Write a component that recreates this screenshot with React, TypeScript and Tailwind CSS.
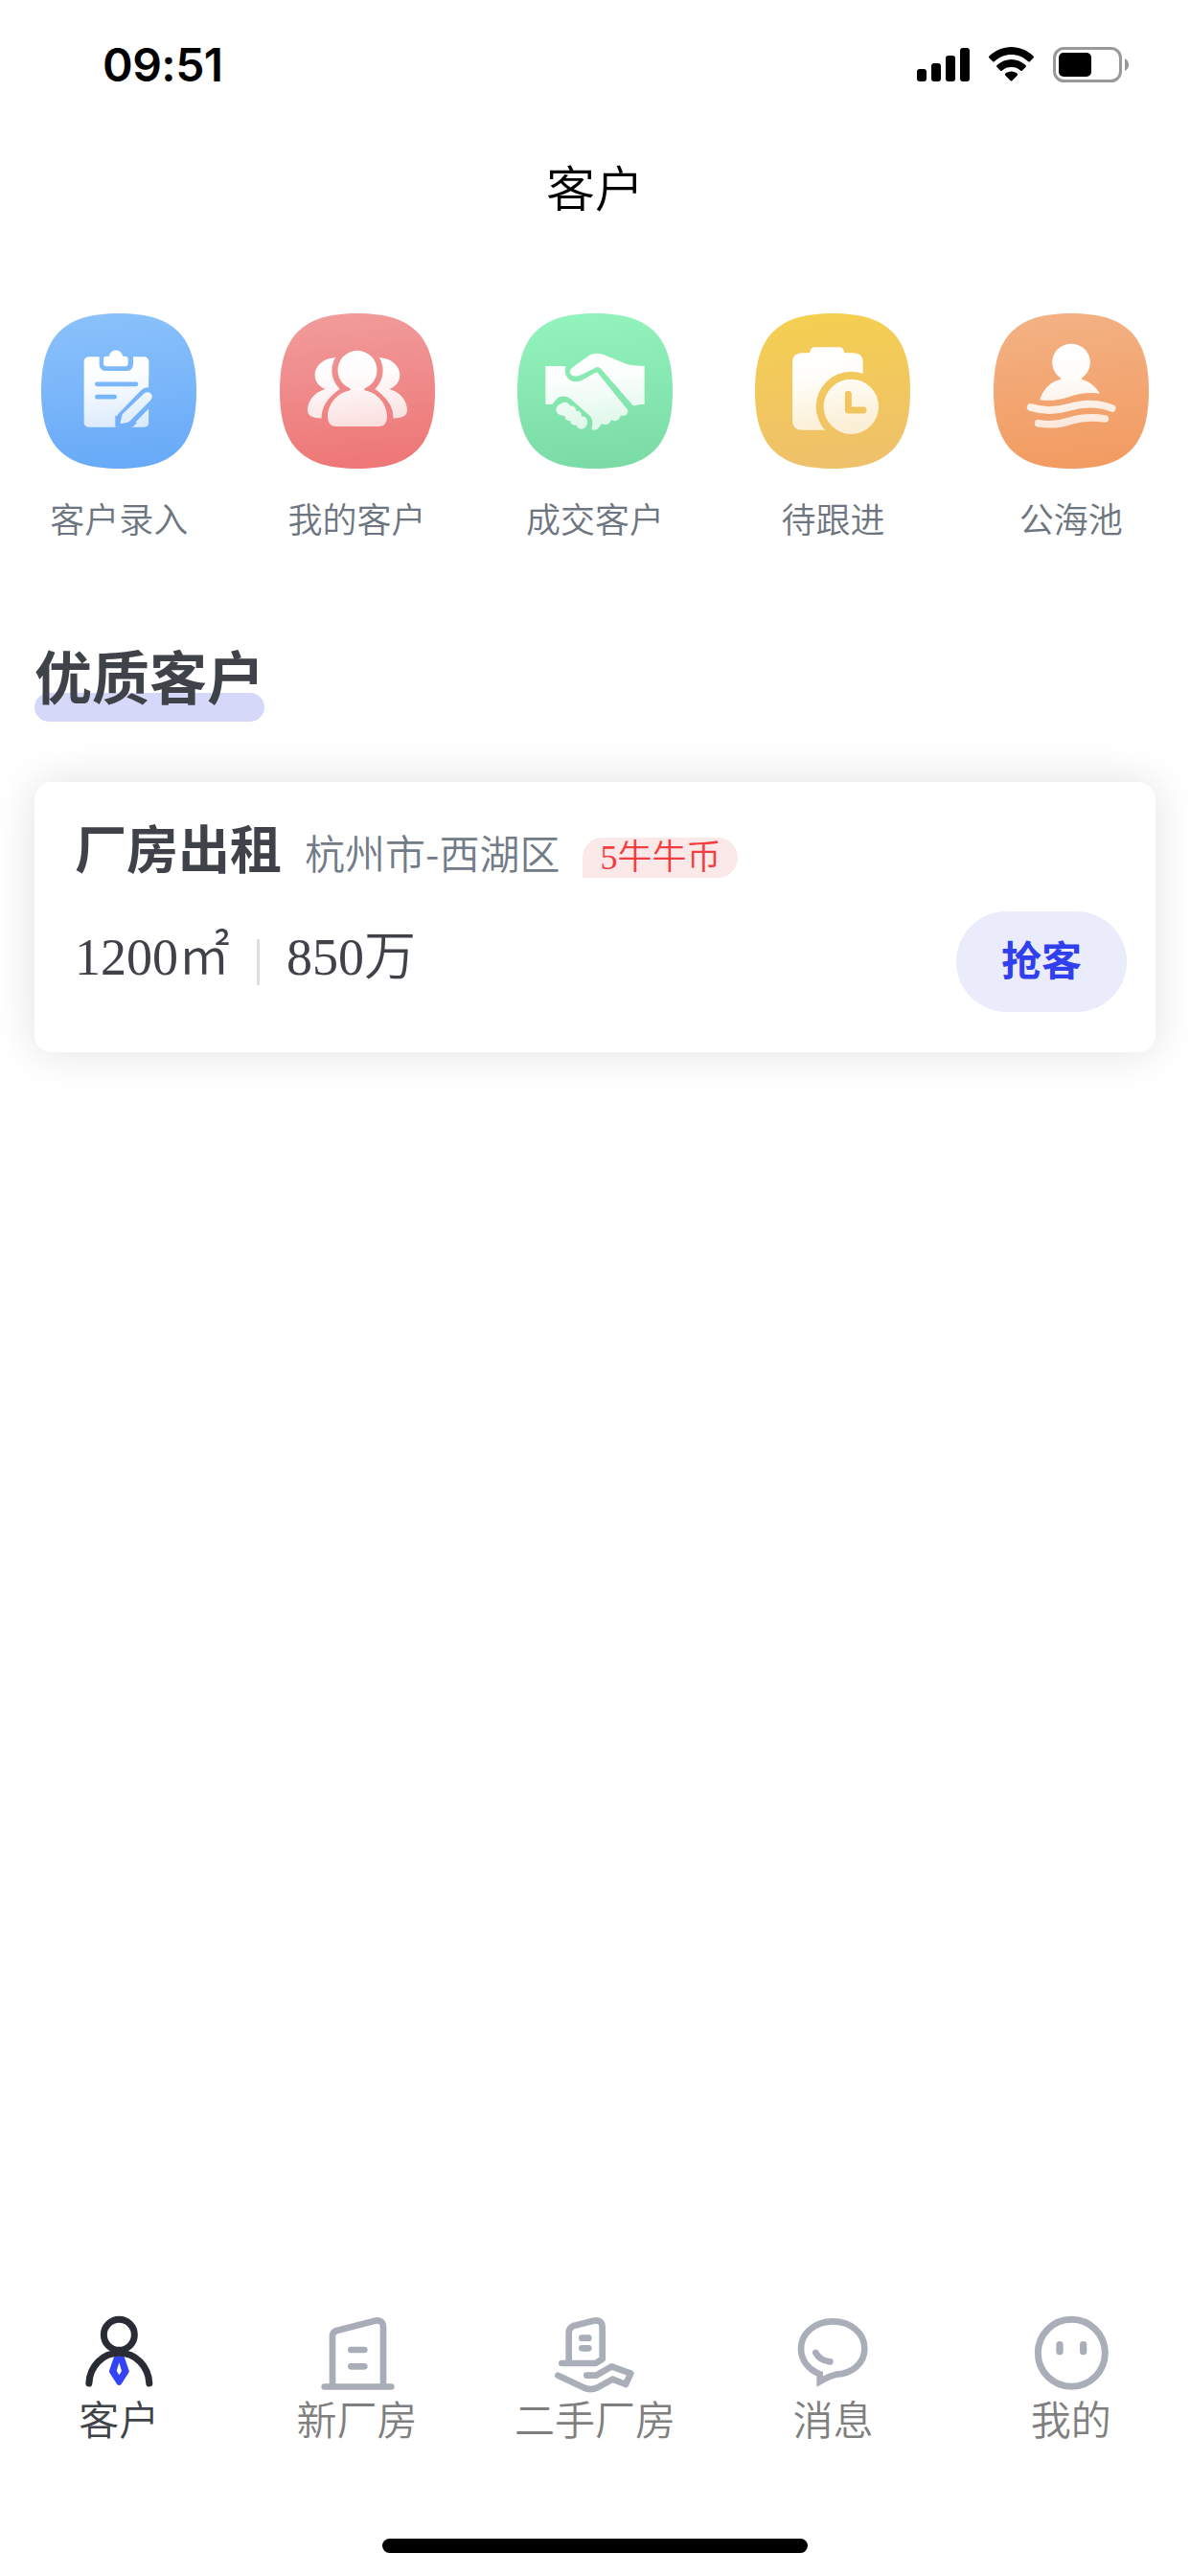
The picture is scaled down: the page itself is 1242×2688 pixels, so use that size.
import React from 'react';

interface QuickAction {
  label: string;
  icon: React.ReactNode;
}

interface Tab {
  label: string;
  icon: React.ReactNode;
  active?: boolean;
}

const Tile: React.FC<{ id: string; from: string; to: string; children: React.ReactNode }> = ({ id, from, to, children }) => (
  <svg className="w-[162px] h-[162px]" viewBox="0 0 486 486">
    <defs>
      <linearGradient id={`${id}-bg`} x1="0.45" y1="0" x2="0.55" y2="1">
        <stop offset="0" stopColor={from} />
        <stop offset="1" stopColor={to} />
      </linearGradient>
      <linearGradient id={`${id}-fg`} gradientUnits="userSpaceOnUse" x1="220" y1="120" x2="250" y2="370">
        <stop offset="0" stopColor="#fff" />
        <stop offset="0.3" stopColor="#fff" stopOpacity="0.97" />
        <stop offset="1" stopColor="#fff" stopOpacity="0.72" />
      </linearGradient>
    </defs>
    <path
      d="M0 243C0 71 71 0 243 0S486 71 486 243 415 486 243 486 0 415 0 243Z"
      fill={`url(#${id}-bg)`}
    />
    {children}
  </svg>
);

const EntryIcon = () => (
  <Tile id="entry" from="#8ac1fb" to="#68aaf8">
    <mask id="entry-mask" maskUnits="userSpaceOnUse" x="0" y="0" width="486" height="486">
      <rect x="134" y="136" width="203" height="220" rx="15" fill="#fff" />
      <path d="M182 125V158Q182 180 204 180H266Q288 180 288 158V125Z" fill="#000" />
      <path d="M175 221.5H297M175 261.5H230" stroke="#000" strokeWidth="14" strokeLinecap="round" />
      <path d="M334 260L262 334" stroke="#000" strokeWidth="57" strokeLinecap="round" />
      <path d="M232 320V356H286L300 342Z" fill="#000" />
      <rect x="337" y="200" width="60" height="160" fill="#000" />
    </mask>
    <rect width="486" height="486" fill="url(#entry-fg)" mask="url(#entry-mask)" />
    <path
      d="M205 134H213C215 122 223 115.5 234 115.5S253 122 255 134H262Q272 134 272 144V156Q272 166 262 166H205Q195 166 195 156V144Q195 134 205 134Z"
      fill="#fff"
    />
    <path
      d="M324 249C335 242 349 250 347 263Q346 268 342 272L278 337Q275 340 271 341L252 345Q247 346 248 341L253 320Q254 316 257 313Z"
      fill="url(#entry-fg)"
    />
  </Tile>
);

const TeamIcon = () => (
  <Tile id="team" from="#f19b9b" to="#ee7676">
    <mask id="team-mask" maskUnits="userSpaceOnUse" x="0" y="0" width="486" height="486">
      <rect width="486" height="486" fill="#fff" />
      <circle cx="243" cy="179" r="80" fill="#000" />
      <path
        d="M243 241C199 241 150 285 150 326Q150 354 181 354H305Q336 354 336 326C336 285 287 241 243 241Z"
        fill="#000"
        stroke="#000"
        strokeWidth="39"
      />
    </mask>
    <g fill="url(#team-fg)">
      <g mask="url(#team-mask)">
        <path d="M182 138C136 138 110 165 110 193C110 213 122 230 143 237C109 246 87 274 87 303C87 323 107 329 141 329L200 240V138Z" />
        <path d="M304 138C350 138 376 165 376 193C376 213 364 230 343 237C377 246 399 274 399 303C399 323 379 329 345 329L286 240V138Z" />
      </g>
      <circle cx="243" cy="178" r="61.5" />
      <path d="M220 234H266Q262 241 272 243C307 250 336 285 336 324Q336 354 308 354H178Q150 354 150 324C150 285 179 250 214 243Q224 241 220 234Z" />
    </g>
  </Tile>
);

const DealIcon = () => (
  <Tile id="deal" from="#92f3bc" to="#7adba6">
    <g fill="url(#deal-fg)">
      <path d="M398 165V285H386L368 289Q363 290 359 285L260 172Q252 164 243 171L200 192Q179 202 168 191Q160 183 170 171Q188 158 224 132Q248 120 272 130L337 157Q348 162 362 163L398 165Z" />
      <path d="M88 165H151Q145 184 157 202Q172 220 200 211L245 185Q249 183 252 187L343 299Q350 308 341 317Q331 324 323 319Q321 333 309 336Q300 338 295 332Q289 346 278 348Q268 349 262 346Q256 364 242 365Q230 365 233 357Q240 335 227 321L166 267Q138 250 118 273Q112 285 104 285H88Z" />
      <path d="M136 283C147 273 163 279 165 290C177 288 185 297 183 306C195 303 202 312 201 323C212 321 221 330 219 343C217 357 207 363 199 362Q187 360 185 350C173 352 166 345 166 336C155 337 147 330 149 321C138 322 122 315 121 303Q121 289 136 283Z" />
    </g>
  </Tile>
);

const FollowIcon = () => (
  <Tile id="follow" from="#f4cf51" to="#efc06b">
    <mask id="follow-mask" maskUnits="userSpaceOnUse" x="0" y="0" width="486" height="486">
      <rect width="486" height="486" fill="#fff" />
      <circle cx="301" cy="292" r="110" fill="#000" />
      <rect x="300" y="188" width="50" height="100" fill="#000" />
    </mask>
    <g mask="url(#follow-mask)">
      <path
        d="M147 124H169Q172 124 173 118Q175 106 188 106H263Q276 106 278 118Q279 124 283 124H308Q338 124 338 154V365H147Q117 365 117 335V154Q117 124 147 124Z"
        fill="url(#follow-fg)"
      />
    </g>
    <circle cx="301" cy="292" r="86" fill="url(#follow-fg)" />
    <path d="M292 253V303H339" fill="none" stroke="#f1c65f" strokeWidth="21" strokeLinecap="round" strokeLinejoin="round" />
  </Tile>
);

const PoolIcon = () => (
  <Tile id="pool" from="#f3b183" to="#f29b61">
    <g fill="url(#pool-fg)">
      <path d="M243 95A58.5 58.5 0 0 1 275 203Q274 206 279 207Q315 220 333 251C300 246 265 252 240 260C210 271 180 275 145 271Q160 220 208 207Q213 206 211 203A58.5 58.5 0 0 1 243 95Z" />
    </g>
    <g fill="none" stroke="url(#pool-fg)" strokeWidth="23" strokeLinecap="round">
      <path d="M116 294C160 308 195 306 235 294C285 279 325 279 371 297" />
      <path d="M140 344C180 351 210 347 242 336C278 325 310 324 349 330" />
    </g>
  </Tile>
);

const CustomerTabIcon = () => (
  <svg className="w-[84px] h-[84px]" viewBox="0 0 252 252" fill="none" strokeLinecap="round">
    <path d="M112 133H142L158 179Q159 182 157 185L134 221Q127 229 120 221L97 185Q95 182 96 179Z" fill="#3344f5" />
    <path d="M127 154L135 180L127 193L119 180Z" fill="#fff" />
    <g stroke="#2a2c35" strokeWidth="21">
      <circle cx="127" cy="67" r="48" />
      <path d="M32.5 219C35 165 75 124 127 124S219 165 221.5 219" />
    </g>
  </svg>
);

const FactoryTabIcon = () => (
  <svg className="w-[84px] h-[84px]" viewBox="0 0 252 252" fill="none" stroke="#a9adb8" strokeWidth="20" strokeLinecap="round">
    <path d="M23 229.5H232M48 229V71Q48 58 61 54L181 23C196 19 207 27 207 42V229M106 114H148M106 166H148" />
  </svg>
);

const UsedFactoryTabIcon = () => (
  <svg className="w-[84px] h-[84px]" viewBox="0 0 252 252" fill="none" stroke="#a9aeb9" strokeWidth="20" strokeLinecap="round" strokeLinejoin="round">
    <path d="M44 154V61Q44 45 58 39L121 23Q149 18 149 45V143L128 156H22" />
    <path d="M85 77H106M85 109H106" />
    <path d="M10 194L90 232Q112 243 134 232L181 206L222 222L238 188L178 166L130 194H100" />
  </svg>
);

const MessageTabIcon = () => (
  <svg className="w-[84px] h-[84px]" viewBox="0 0 252 252" fill="none" stroke="#a9aeb9" strokeWidth="20">
    <path d="M86 213V190C50 176 27 146 27 110C27 62 71 25 127 25S226 62 226 110S184 189 137 191Q115 196 86 213Z" />
    <path d="M73 123C82 141 98 149 118 151" strokeLinecap="round" />
  </svg>
);

const MineTabIcon = () => (
  <svg className="w-[84px] h-[84px]" viewBox="0 0 252 252" fill="none" stroke="#a9aeb9">
    <circle cx="127" cy="124" r="105" strokeWidth="21" />
    <path d="M90 98V119M164 98V119" strokeWidth="22" strokeLinecap="round" />
  </svg>
);

const QUICK_ACTIONS: QuickAction[] = [
  { label: '客户录入', icon: <EntryIcon /> },
  { label: '我的客户', icon: <TeamIcon /> },
  { label: '成交客户', icon: <DealIcon /> },
  { label: '待跟进', icon: <FollowIcon /> },
  { label: '公海池', icon: <PoolIcon /> },
];

const TABS: Tab[] = [
  { label: '客户', icon: <CustomerTabIcon />, active: true },
  { label: '新厂房', icon: <FactoryTabIcon /> },
  { label: '二手厂房', icon: <UsedFactoryTabIcon /> },
  { label: '消息', icon: <MessageTabIcon /> },
  { label: '我的', icon: <MineTabIcon /> },
];

const StatusBar = () => (
  <div className="flex justify-between h-[132px] pl-[107px] pr-[63px] pt-[49px]">
    <span className="font-['Inter'] font-semibold text-[48px] leading-[38px] tracking-[-0.5px] text-black">09:51</span>
    <div className="flex">
      <svg className="w-[56px] h-[38px]" viewBox="0 0 56 38">
        <rect x="0" y="23" width="10" height="13" rx="3" />
        <rect x="15" y="17" width="10" height="19" rx="3" />
        <rect x="30" y="9" width="10" height="27" rx="3" />
        <rect x="45" y="1" width="10" height="35" rx="3" />
      </svg>
      <svg className="w-[48px] h-[38px] ml-[19px]" viewBox="0 0 48 38">
        <path d="M23.5 0C32 0 40 3.5 46.5 9.5Q47.5 10.5 46.5 11.5L43 15Q42 16 41 15C36 10.5 30 8 23.5 8S11 10.5 6 15Q5 16 4 15L0.5 11.5Q-0.5 10.5 0.5 9.5C7 3.5 15 0 23.5 0Z" />
        <path d="M23.5 13C29 13 34 15 38.5 19Q39.5 20 38.5 21L35 24.5Q34 25.5 33 24.5C30.5 22 27 21 23.5 21S16.5 22 14 24.5Q13 25.5 12 24.5L8.5 21Q7.5 20 8.5 19C13 15 18 13 23.5 13Z" />
        <path d="M23.5 25.5C26 25.5 28 26.5 29.7 27.7Q30.7 28.7 29.7 29.7L24.5 35Q23.5 36 22.5 35L17.3 29.7Q16.3 28.7 17.3 27.7C19 26.5 21 25.5 23.5 25.5Z" />
      </svg>
      <svg className="w-[80px] h-[38px] ml-[19px]" viewBox="0 0 80 38">
        <rect x="1.5" y="1.5" width="69" height="34" rx="10" fill="none" stroke="#999" strokeWidth="3" />
        <rect x="6" y="6" width="34" height="25" rx="5" />
        <path d="M75 12Q79 14 79 18.5T75 25Z" fill="#999" />
      </svg>
    </div>
  </div>
);

const CustomerCard = () => (
  <div className="mx-[36px] mt-[63px] h-[282px] pt-[30px] pl-[42px] pr-[30px] rounded-[18px] bg-white shadow-[0_0_45px_rgba(0,0,0,0.12)]">
    <div className="flex items-baseline gap-[24px] h-[75px] whitespace-nowrap">
      <span className="text-[54px] leading-[75px] font-bold text-[#3f4248]">厂房出租</span>
      <span className="text-[42px] leading-[60px] text-[#727b88]">杭州市-西湖区</span>
      <span className="px-[18px] h-[42px] rounded-[21px] rounded-bl-none bg-[#fbe9e9] font-['Liberation_Serif','Noto_Sans_CJK_SC',serif] text-[36px] leading-[42px] text-[#f23d41]">
        5牛牛币
      </span>
    </div>
    <div className="flex items-center justify-between mt-[30px] h-[105px]">
      <div className="flex items-center font-['Liberation_Serif','Noto_Sans_CJK_SC',serif] text-[54px] leading-[78px] text-[#3f4248]">
        <span className="pb-[9px]">1200㎡</span>
        <span className="mx-[28px] w-[3px] h-[48px] bg-[#dedede]" />
        <span className="pb-[9px]">850万</span>
      </div>
      <button className="w-[178px] h-[105px] pb-[8px] rounded-full bg-[#eaebfb] text-[42px] leading-[97px] font-bold text-[#3040ee]">
        抢客
      </button>
    </div>
  </div>
);

export default function App() {
  return (
    <div className="flex flex-col w-[1242px] h-[2688px] overflow-hidden bg-white font-['Noto_Sans_CJK_SC',sans-serif] font-[350]">
      <StatusBar />
      <h1 className="h-[124px] text-center text-[51px] leading-[124px] text-black">客户</h1>

      <div className="grid grid-cols-5 mt-[71px]">
        {QUICK_ACTIONS.map((action) => (
          <div key={action.label} className="flex flex-col items-center">
            {action.icon}
            <span className="mt-[24px] text-[36px] leading-[54px] text-[#6d7580]">{action.label}</span>
          </div>
        ))}
      </div>

      <div className="relative isolate w-[240px] h-[91px] ml-[36px] mt-[95px]">
        <span className="absolute -z-10 left-0 bottom-0 w-[240px] h-[30px] rounded-full bg-[#d6d8f9]" />
        <h2 className="text-[60px] leading-[84px] font-bold text-[#3f4248] whitespace-nowrap">优质客户</h2>
      </div>

      <CustomerCard />

      <div className="flex-1" />

      <div className="grid grid-cols-5">
        {TABS.map((tab) => (
          <div key={tab.label} className="flex flex-col items-center">
            {tab.icon}
            <span className={`mt-[4px] text-[42px] leading-[42px] ${tab.active ? 'text-[#3f4248]' : 'text-[#7f7f7f]'}`}>
              {tab.label}
            </span>
          </div>
        ))}
      </div>
      <div className="mx-auto mt-[105px] mb-[24px] w-[444px] h-[15px] rounded-full bg-black" />
    </div>
  );
}
